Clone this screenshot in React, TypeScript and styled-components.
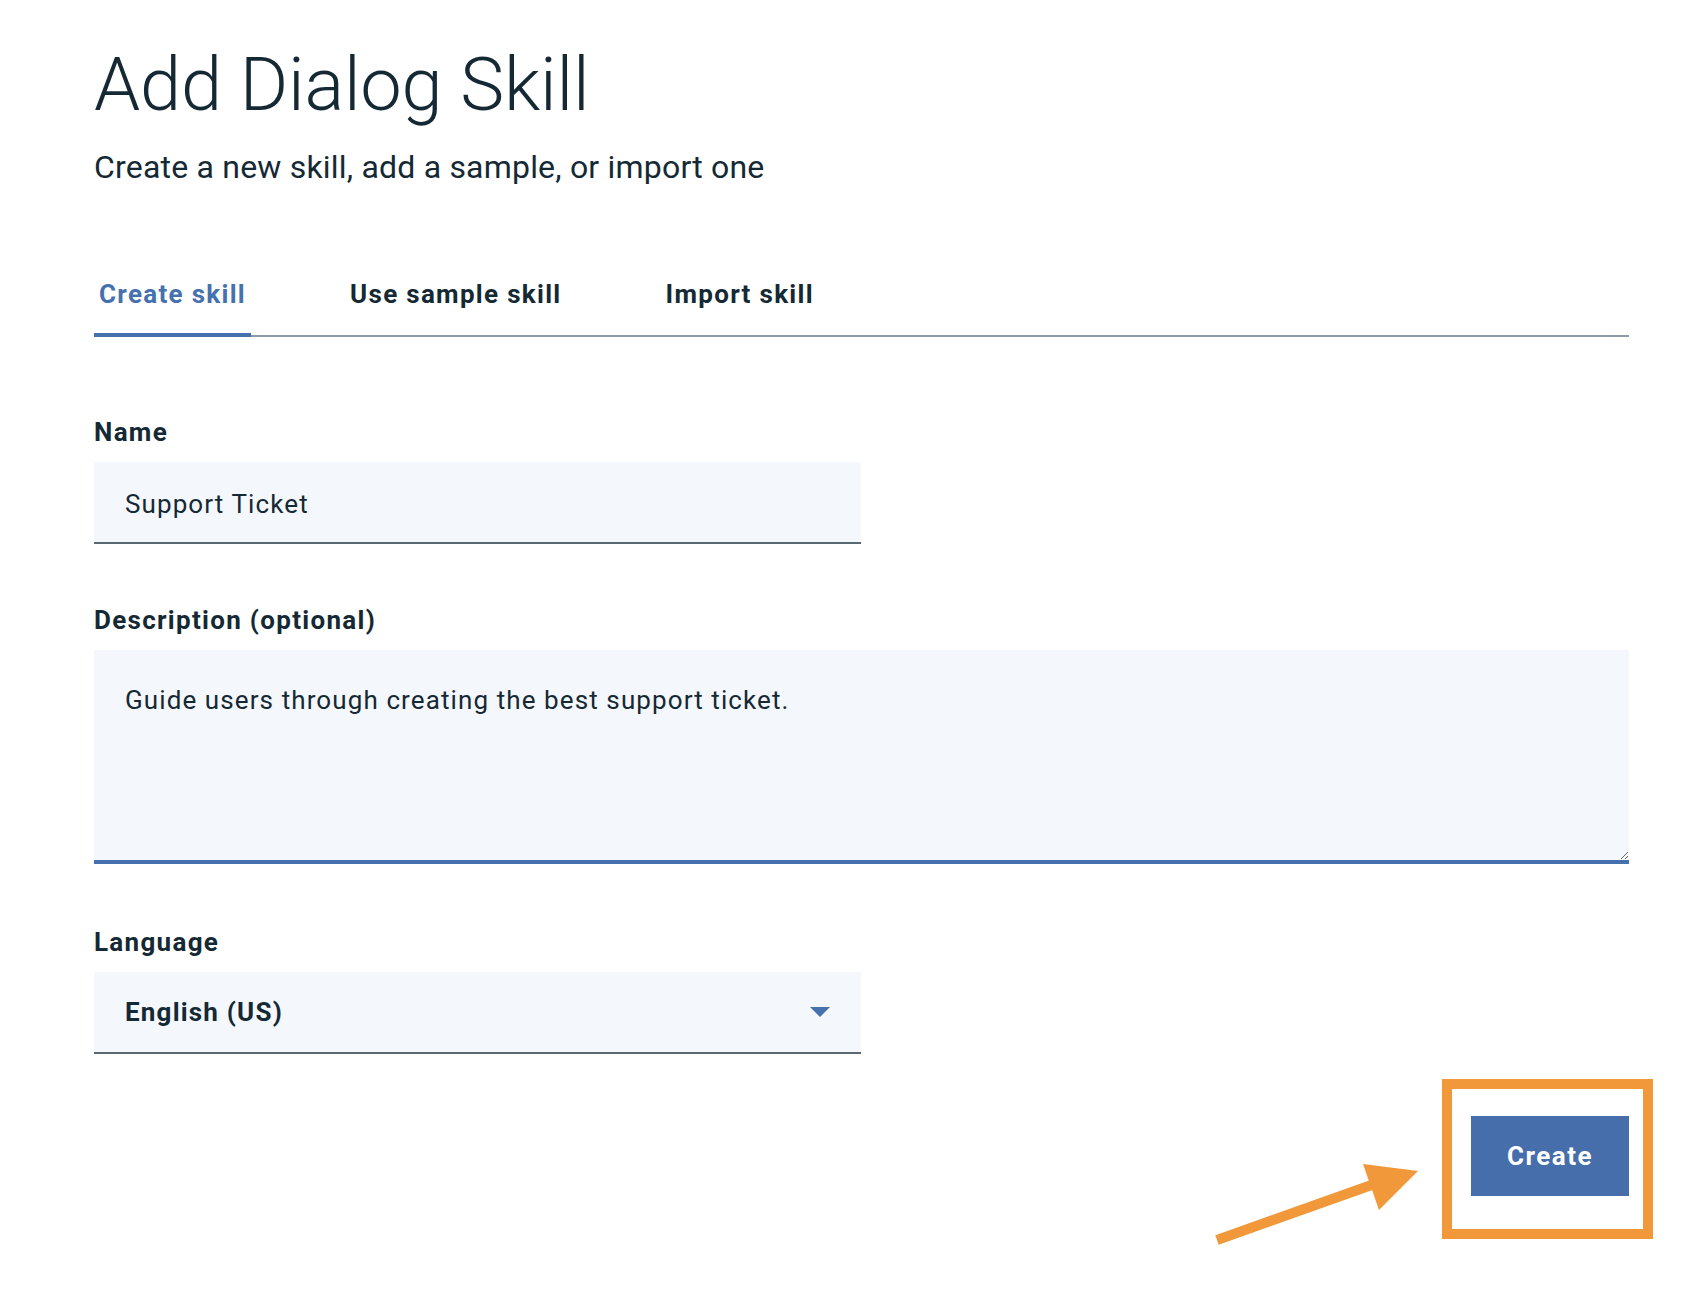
import styled, { createGlobalStyle } from 'styled-components';

const GlobalStyle = createGlobalStyle`
  html, body {
    margin: 0;
    padding: 0;
    background: #ffffff;
  }
  body {
    font-family: Roboto, "Liberation Sans", Arial, sans-serif;
    color: #152935;
  }
  * {
    box-sizing: border-box;
  }
`;

const Page = styled.main`
  position: relative;
  width: 1684px;
  min-height: 1292px;
  padding: 45px 55px 0 94px;
`;

const Title = styled.h1`
  margin: 0;
  font-size: 74px;
  line-height: 80px;
  font-weight: 300;
  letter-spacing: -0.2px;
  color: #152935;
`;

const Subtitle = styled.p`
  margin: 22px 0 0;
  font-size: 32px;
  line-height: 40px;
  font-weight: 400;
  letter-spacing: 0.2px;
  color: #152935;
`;

const TabList = styled.nav`
  display: flex;
  gap: 94px;
  margin-top: 71px;
  border-bottom: 2px solid #8c9ba5;
`;

const Tab = styled.button<{ $active?: boolean }>`
  margin: 0 0 -2px;
  padding: 20px 5px 23px;
  border: none;
  border-bottom: 4px solid ${(p) => (p.$active ? '#4571ae' : 'transparent')};
  background: none;
  font-family: inherit;
  font-size: 26px;
  line-height: 32px;
  font-weight: 700;
  letter-spacing: 1.3px;
  color: ${(p) => (p.$active ? '#4571ae' : '#152935')};
  cursor: pointer;
`;

const Form = styled.form`
  display: flex;
  flex-direction: column;
  gap: 60px;
  margin-top: 79px;
`;

const Field = styled.div<{ $pushDown?: number }>`
  display: flex;
  flex-direction: column;
  gap: 14px;
  margin-top: ${(p) => p.$pushDown ?? 0}px;
`;

const Label = styled.label`
  font-size: 26px;
  line-height: 32px;
  font-weight: 700;
  letter-spacing: 1.3px;
  color: #152935;
`;

const TextInput = styled.input`
  width: 767px;
  height: 82px;
  padding: 3px 31px 0;
  border: none;
  border-bottom: 2px solid #5a6872;
  background: #f4f7fb;
  font-family: inherit;
  font-size: 26px;
  letter-spacing: 1.1px;
  color: #152935;
  outline: none;
`;

const TextArea = styled.textarea`
  width: 100%;
  height: 214px;
  padding: 34px 31px 32px;
  border: none;
  border-bottom: 4px solid #4571ae;
  background: #f4f7fb;
  font-family: inherit;
  font-size: 26px;
  line-height: 32px;
  letter-spacing: 1.1px;
  color: #152935;
  resize: vertical;
  outline: none;
`;

const Select = styled.div`
  display: flex;
  align-items: center;
  justify-content: space-between;
  width: 767px;
  height: 82px;
  padding: 0 31px;
  border-bottom: 2px solid #5a6872;
  background: #f4f7fb;
  font-size: 26px;
  font-weight: 700;
  letter-spacing: 1.2px;
  color: #152935;
`;

const Footer = styled.div`
  display: flex;
  justify-content: flex-end;
  margin-top: 62px;
`;

const PrimaryButton = styled.button`
  width: 158px;
  height: 80px;
  border: none;
  background: #466eab;
  color: #ffffff;
  font-family: inherit;
  font-size: 26px;
  font-weight: 700;
  letter-spacing: 1.5px;
  cursor: pointer;
`;

const Highlight = styled.div`
  position: absolute;
  left: 1442px;
  top: 1079px;
  width: 211px;
  height: 160px;
  border: 10px solid #f0983a;
  pointer-events: none;
`;

const Pointer = styled.svg`
  position: absolute;
  left: 1200px;
  top: 1140px;
  pointer-events: none;
`;

export default function App() {
  return (
    <>
      <GlobalStyle />
      <Page>
        <Title>Add Dialog Skill</Title>
        <Subtitle>Create a new skill, add a sample, or import one</Subtitle>

        <TabList>
          <Tab $active type="button">Create skill</Tab>
          <Tab type="button">Use sample skill</Tab>
          <Tab type="button">Import skill</Tab>
        </TabList>

        <Form onSubmit={(e) => e.preventDefault()}>
          <Field>
            <Label htmlFor="skill-name">Name</Label>
            <TextInput id="skill-name" defaultValue="Support Ticket" />
          </Field>
          <Field>
            <Label htmlFor="skill-desc">Description (optional)</Label>
            <TextArea
              id="skill-desc"
              defaultValue="Guide users through creating the best support ticket."
            />
          </Field>
          <Field $pushDown={2}>
            <Label>Language</Label>
            <Select>
              <span>English (US)</span>
              <svg width="20" height="10" viewBox="0 0 20 10">
                <path d="M0 0 L20 0 L10 10 Z" fill="#4571ae" />
              </svg>
            </Select>
          </Field>
        </Form>

        <Footer>
          <PrimaryButton type="button">Create</PrimaryButton>
        </Footer>

        <Highlight />
        <Pointer width="240" height="120" viewBox="0 0 240 120">
          <line x1="17" y1="100" x2="180" y2="42" stroke="#f0983a" strokeWidth="10" />
          <polygon points="163,24 218,31 179,70" fill="#f0983a" />
        </Pointer>
      </Page>
    </>
  );
}
